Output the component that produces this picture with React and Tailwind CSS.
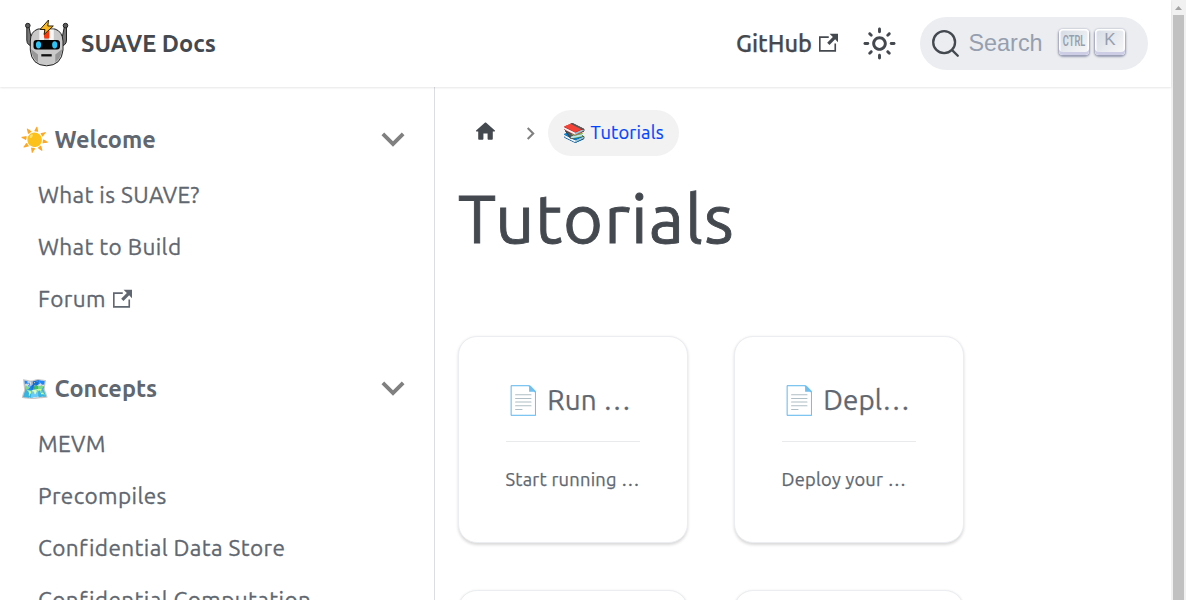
const External = ({ className }) => (
  <svg viewBox="0 0 24 24" fill="currentColor" className={className}>
    <path d="M21 13v10h-21v-19h12v2h-10v15h17v-8h2zm3-12h-10.988l4.035 4-6.977 7.07 2.828 2.828 6.977-7.07 4.125 4.172v-11z" />
  </svg>
);

const Sun = () => (
  <svg viewBox="0 0 24 24" fill="currentColor" className="size-[35px]">
    <path d="M12,9c1.65,0,3,1.35,3,3s-1.35,3-3,3s-3-1.35-3-3S10.35,9,12,9 M12,7c-2.76,0-5,2.24-5,5s2.24,5,5,5s5-2.24,5-5 S14.76,7,12,7L12,7z M2,13l2,0c0.55,0,1-0.45,1-1s-0.45-1-1-1l-2,0c-0.55,0-1,0.45-1,1S1.45,13,2,13z M20,13l2,0c0.55,0,1-0.45,1-1 s-0.45-1-1-1l-2,0c-0.55,0-1,0.45-1,1S19.45,13,20,13z M11,2v2c0,0.55,0.45,1,1,1s1-0.45,1-1V2c0-0.55-0.45-1-1-1S11,1.45,11,2z M11,20v2c0,0.55,0.45,1,1,1s1-0.45,1-1v-2c0-0.55-0.45-1-1-1C11.45,19,11,19.45,11,20z M5.99,4.58c-0.39-0.39-1.03-0.39-1.41,0 c-0.39,0.39-0.39,1.03,0,1.41l1.06,1.06c0.39,0.39,1.03,0.39,1.41,0s0.39-1.03,0-1.41L5.99,4.58z M18.36,16.95 c-0.39-0.39-1.03-0.39-1.41,0c-0.39,0.39-0.39,1.03,0,1.41l1.06,1.06c0.39,0.39,1.03,0.39,1.41,0c0.39-0.39,0.39-1.03,0-1.41 L18.36,16.95z M19.42,5.99c0.39-0.39,0.39-1.03,0-1.41c-0.39-0.39-1.03-0.39-1.41,0l-1.06,1.06c-0.39,0.39-0.39,1.03,0,1.41 s1.03,0.39,1.41,0L19.42,5.99z M7.05,18.36c0.39-0.39,0.39-1.03,0-1.41c-0.39-0.39-1.03-0.39-1.41,0l-1.06,1.06 c-0.39,0.39-0.39,1.03,0,1.41s1.03,0.39,1.41,0L7.05,18.36z" />
  </svg>
);

const Chevron = ({ className }) => (
  <svg viewBox="0 0 24 24" fill="#808080" className={className}>
    <path d="M7.41 15.41L12 10.83l4.59 4.58L18 14l-6-6-6 6z" />
  </svg>
);

const Robot = () => (
  <svg viewBox="0 0 48 52" className="mb-[1px] h-[52px] w-[48px]">
    <g stroke="#222" strokeWidth="1" strokeLinejoin="round">
      <path d="M3.800 10 H6 L8 20 V29 L5.500 27.500 Q3.800 26 3.800 23 Z M43.500 10 H41.300 L39.300 20 V29 L41.800 27.500 Q43.500 26 43.500 23 Z" fill="#777" />
      <circle cx="4.800" cy="8.600" r="2.300" fill="#5c5c5c" />
      <circle cx="42.500" cy="8.600" r="2.300" fill="#5c5c5c" />
      <path d="M7.300 24 Q7.500 14.500 15 12 H32 Q39.500 14.500 40 24 V33 Q38.500 48.500 23.600 48.800 Q8.500 48.500 7.300 33 Z" fill="#c9c9c9" />
    </g>
    <path d="M8 32 L15 37.500 V45.500 Q9 41 8 32 Z M39.300 32 L32.300 37.500 V45.500 Q38.300 41 39.300 32 Z" fill="#979797" />
    <path d="M16.300 12.500 H21 V23 H16.300 Z M26.300 12.500 H30.800 V23 H26.300 Z" fill="#f7f7f7" />
    <path d="M21 13 H26.300 V20 Q26.300 21.500 24.800 21.500 H22.500 Q21 21.500 21 20 Z" fill="#f23a12" />
    <rect x="10.500" y="23" width="26.500" height="9.500" rx="3" fill="#050505" />
    <ellipse cx="15.500" cy="27.800" rx="2.600" ry="3.600" fill="#2cc4f5" />
    <ellipse cx="31.700" cy="27.800" rx="2.600" ry="3.600" fill="#2cc4f5" />
    <path d="M18.300 38.300 H28.700" stroke="#111" strokeWidth="2.300" />
    <path d="M25.500 3 L17 12.500 H22 L21 17.500 L30.300 9 H24.800 Z" fill="#f9b822" stroke="#2a2005" strokeWidth="1" strokeLinejoin="round" />
  </svg>
);

const Key = ({ children }) => (
  <span className="flex h-[26px] w-[30px] justify-center rounded-[4px] bg-[linear-gradient(-225deg,#d5dbe4,#f8f8f8)] text-[#969faf] shadow-[inset_0_-3px_0_0_#cdcde6,inset_0_0_1px_1.500px_#fff,0_1px_2px_1px_rgba(30,35,90,0.4)]">
    {children}
  </span>
);

const Section = ({ emoji, title, items, className }) => (
  <section className={className}>
    <h2 className="flex h-[52px] items-center justify-between pr-[18px] pl-[20px] text-[23.500px] font-bold">
      <span>{emoji} {title}</span>
      <Chevron className="mb-[2px] size-[46px] rotate-180" />
    </h2>
    <ul className="mt-[3px] text-[22.600px] tracking-[0.380px] [-webkit-text-stroke:0.300px_currentColor]">
      {items.map((item) => (
        <li key={item} className="flex h-[52px] items-center pl-[38px]">
          {item}
          {item === 'Forum' && <External className="mb-[1px] ml-[7px] size-[19.500px]" />}
        </li>
      ))}
    </ul>
  </section>
);

const Card = ({ title, text }) => (
  <article className="h-[207px] w-[230px] rounded-[19px] border border-[#ebedf0] bg-white pr-[47px] pl-[46.500px] pt-[42px] text-[#606770] shadow-[0_1.500px_3px_0_rgba(0,0,0,0.15)] [-webkit-text-stroke:0.250px_currentColor]">
    <h2 className="h-[42px] overflow-hidden text-[27.800px] leading-[42px] tracking-[0.150px] whitespace-pre">📄 {title}</h2>
    <hr className="mt-[20px] border-[#e9eaec]" />
    <p className="mt-[22px] overflow-hidden text-[18.300px] leading-[30px] tracking-[0.250px] whitespace-nowrap">{text}</p>
  </article>
);

export default function App() {
  return (
    <div className="flex h-[600px] w-[1186px] overflow-hidden bg-white font-[Ubuntu,'Noto_Sans',sans-serif]">
      <div className="flex w-[1171px] flex-col">
        <header className="relative flex h-[87px] shrink-0 items-center pr-[23px] pl-[23px] text-[23.600px] text-[#444950] shadow-[0_1px_2px_0_rgba(0,0,0,0.1)]">
          <Robot />
          <b className="ml-[10px]">SUAVE Docs</b>
          <a className="ml-auto flex items-center font-medium [-webkit-text-stroke:0.250px_currentColor]">
            GitHub
            <External className="mb-[1px] ml-[6.500px] size-[19.500px]" />
          </a>
          <span className="ml-[24px]"><Sun /></span>
          <div className="ml-[23px] flex h-[53px] w-[228px] items-center rounded-full bg-[#ebedf0] pl-[11px]">
            <svg viewBox="0 0 20 20" fill="none" stroke="currentColor" strokeWidth="1.600" className="mr-[1px] size-[29px]">
              <path d="M14.386 14.386l4.0877 4.0877-4.0877-4.0877c-2.9418 2.9419-7.7115 2.9419-10.6533 0-2.9419-2.9418-2.9419-7.7115 0-10.6533 2.9418-2.9419 7.7115-2.9419 10.6533 0 2.9419 2.9418 2.9419 7.7115 0 10.6533z" strokeLinejoin="round" />
            </svg>
            <span className="ml-[7.500px] w-[90.500px] font-['Liberation_Sans',sans-serif] text-[23.400px] text-[#969faf]">Search</span>
            <span className="flex gap-[6px] pb-[3px]">
              <Key><span className="scale-x-[0.660] font-['Roboto',sans-serif] text-[14px] leading-[25px] font-semibold">CTRL</span></Key>
              <Key><span className="font-['Liberation_Sans',sans-serif] text-[17px] leading-[22px]">K</span></Key>
            </span>
          </div>
        </header>
        <div className="flex min-h-0 flex-1">
          <aside className="w-[435px] shrink-0 overflow-hidden border-r border-[#dadde1] pt-[27px] text-[#606770]">
            <Section emoji="☀️" title="Welcome" items={['What is SUAVE?', 'What to Build', 'Forum']} />
            <Section emoji="🗺️" title="Concepts" className="mt-[38px]" items={['MEVM', 'Precompiles', 'Confidential Data Store', 'Confidential Computation']} />
          </aside>
          <main className="flex-1 overflow-hidden pt-[23px] pl-[23px] text-[#444950]">
            <nav className="flex h-[46px] items-center text-[18.300px] tracking-[0.200px]">
              <svg viewBox="0 0 24 24" fill="currentColor" className="mb-[3px] ml-[15px] size-[25px]">
                <path d="M10 19v-5h4v5c0 .55.45 1 1 1h3c.55 0 1-.45 1-1v-7h1.700c.46 0 .68-.57.33-.87L12.670 3.600c-.38-.34-.96-.34-1.340 0l-8.360 7.530c-.34.3-.13.87.33.87H5v7c0 .55.45 1 1 1h3c.55 0 1-.45 1-1z" />
              </svg>
              <Chevron className="ml-[20px] size-[25px] rotate-90" />
              <span className="ml-[5px] flex h-[46px] w-[131px] items-center rounded-full bg-[#f2f2f2] pl-[15px] whitespace-nowrap text-[#0044ff] [-webkit-text-stroke:0.200px_currentColor]">📚 Tutorials</span>
            </nav>
            <h1 className="mt-[16px] h-[90px] text-[68.500px] leading-[91px] tracking-[1px] [-webkit-text-stroke:0.900px_currentColor]">Tutorials</h1>
            <div className="mt-[74px] grid grid-cols-[230px_230px] gap-x-[46px] gap-y-[47px]">
              <Card title="Run …" text="Start running …" />
              <Card title="Depl…" text="Deploy your …" />
              <Card title="" text="" />
              <Card title="" text="" />
            </div>
          </main>
        </div>
      </div>
      <div className="flex w-[15px] flex-col items-center bg-[#f1f1f1]">
        <svg viewBox="0 0 15 15" className="size-[15px] shrink-0"><path d="M4 10 H11 L7.500 6 Z" fill="#a3a3a3" /></svg>
        <div className="w-[11px] flex-1 bg-[#c1c1c1]" />
      </div>
    </div>
  );
}
